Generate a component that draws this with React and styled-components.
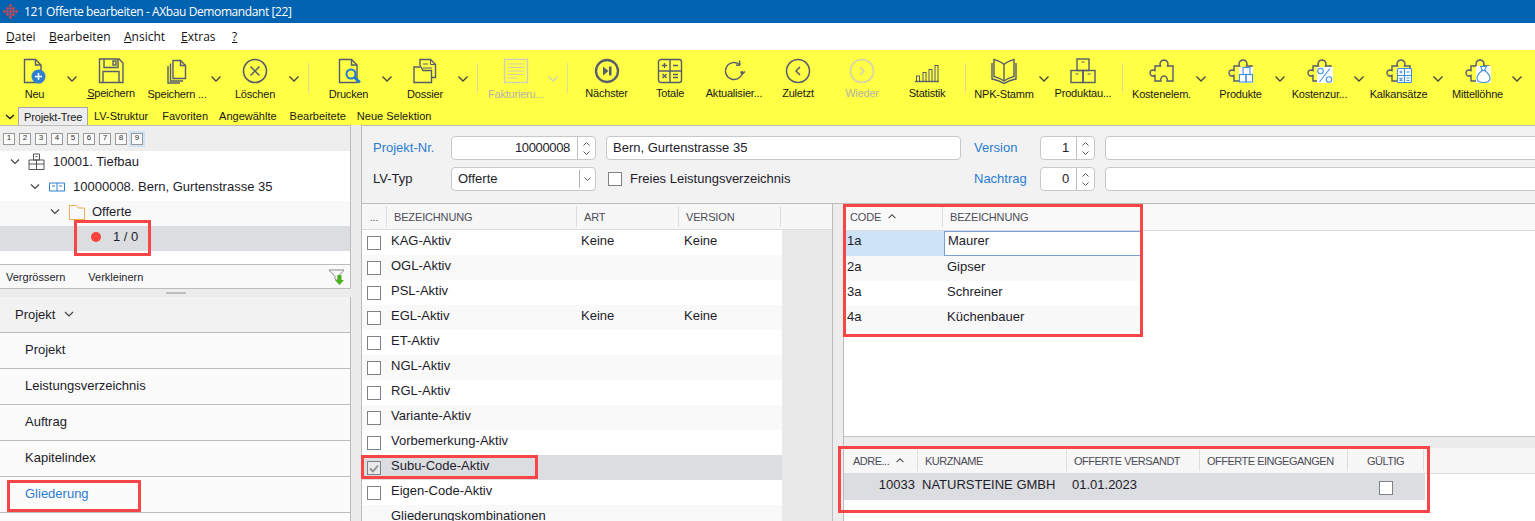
import React from "react";
import styled, { createGlobalStyle } from "styled-components";

const Global = createGlobalStyle`
  html, body { margin: 0; padding: 0; background: #ececec; overflow: hidden; }
  * { box-sizing: border-box; }
`;

const Page = styled.div`
  position: relative;
  width: 1535px;
  height: 521px;
  overflow: hidden;
  font-family: "Liberation Sans", Arial, sans-serif;
  font-size: 13px;
  color: #1c1c2a;
  background: #ececec;
`;

const TitleBar = styled.div`
  height: 23px;
  background: #0063b1;
  color: #fff;
  display: flex;
  align-items: center;
  padding-left: 3px;
  gap: 6px;
  font-family: "Open Sans", sans-serif;
  font-size: 12px;
  letter-spacing: -0.4px;
`;

const MenuBar = styled.div`
  height: 27px;
  background: #fff;
  display: flex;
  align-items: center;
  padding-left: 6px;
  gap: 14px;
  font-family: "Open Sans", sans-serif;
  font-size: 12px;
  color: #111;
`;

const MenuItem = styled.span`
  width: ${p => p.$w}px;
  flex: none;
  white-space: nowrap;
`;

const Ribbon = styled.div`
  background: #ffff46;
  height: 75px;
`;

const ToolRow = styled.div`
  height: 57px;
  display: flex;
  padding-top: 8px;
`;

const Tool = styled.div`
  width: ${p => p.$w}px;
  margin-left: ${p => p.$ml || 0}px;
  display: flex;
  flex-direction: column;
  align-items: center;
  flex: none;
`;

const ToolIcon = styled.svg`
  width: 26px;
  height: 26px;
  flex: none;
  fill: none;
  stroke: ${p => (p.$off ? "#cfcfb8" : "#565c6c")};
  stroke-width: 1.4;
`;

const ToolLabel = styled.div`
  font-size: 11px;
  letter-spacing: -0.2px;
  line-height: 14px;
  margin-top: ${p => (p.$up ? 2 : 3)}px;
  white-space: nowrap;
  color: ${p => (p.$off ? "#b4b4a6" : "#1a1a1a")};
`;

const ToolChevron = styled.svg`
  width: 12px;
  height: 8px;
  flex: none;
  margin-top: 17px;
  fill: none;
  stroke: ${p => (p.$off ? "#cfcfb8" : "#444")};
  stroke-width: 1.3;
`;

const ToolSep = styled.div`
  width: ${p => p.$w || 16}px;
  flex: none;
  display: flex;
  justify-content: center;
  &::after {
    content: "";
    display: block;
    width: 1px;
    height: 30px;
    margin-top: 5px;
    background: #dcdc96;
  }
`;

const TabRow = styled.div`
  height: 18px;
  display: flex;
  align-items: stretch;
  font-size: 11px;
`;

const TabChevron = styled.svg`
  width: 18px;
  height: 18px;
  flex: none;
  fill: none;
  stroke: #222;
  stroke-width: 1.4;
`;

const Tab = styled.div`
  padding: 0 ${p => (p.$active ? 5 : 6)}px;
  margin-right: ${p => p.$mr || 0}px;
  display: flex;
  align-items: center;
  color: #1a1a1a;
  white-space: nowrap;
  ${p => p.$active && "width:70px;letter-spacing:-0.15px;background:#ededed;border:1px solid #a8a8a8;border-bottom:none;"}
`;

const Body = styled.div`
  height: 396px;
  display: flex;
`;

const LeftCol = styled.div`
  width: 351px;
  flex: none;
  display: flex;
  flex-direction: column;
`;

const TreePanel = styled.div`
  height: 164px;
  border: 1px solid #bcbcbc;
  border-left: none;
  background: #fff;
  display: flex;
  flex-direction: column;
`;

const LevelBar = styled.div`
  height: 25px;
  background: #eeeeee;
  display: flex;
  align-items: center;
  padding-left: 1px;
`;

const LevelBtn = styled.div`
  width: 16px;
  height: 16px;
  display: flex;
  align-items: center;
  justify-content: center;
  background: ${p => (p.$on ? "#cfe3f7" : "transparent")};
  &::before {
    content: "${p => p.$n}";
    width: 10px;
    height: 10px;
    border: 1px solid #999;
    background: #fafafa;
    font-size: 8px;
    line-height: 8px;
    text-align: center;
    color: #333;
  }
`;

const TreeRow = styled.div`
  height: 25px;
  flex: none;
  display: flex;
  align-items: center;
  padding-left: ${p => p.$indent}px;
  padding-bottom: 4px;
  background: ${p => (p.$sel ? "#dcdde0" : p.$alt ? "#f9f9f9" : "#fff")};
  white-space: nowrap;
`;

const TreeChevron = styled.svg`
  width: 10px;
  height: 8px;
  flex: none;
  margin-right: 8px;
  fill: none;
  stroke: #444;
  stroke-width: 1.2;
`;

const TreeIcon = styled.svg`
  width: 18px;
  height: 18px;
  flex: none;
  margin-right: ${p => p.$gap}px;
  fill: none;
`;

const RedDot = styled.span`
  width: 10px;
  height: 10px;
  margin-right: 12px;
  border-radius: 50%;
  background: #f8423c;
  flex: none;
`;

const TreeSpace = styled.div`
  flex: 1;
`;

const TreeFooter = styled.div`
  height: 24px;
  border-top: 1px solid #bcbcbc;
  background: #f9f9f9;
  display: flex;
  align-items: center;
  padding: 0 5px 0 6px;
  font-size: 11px;
  gap: 23px;
  & > svg {
    margin-left: auto;
  }
`;

const Splitter = styled.div`
  height: 8px;
  display: flex;
  align-items: center;
  justify-content: center;
  &::after {
    content: "";
    width: 20px;
    height: 2px;
    background: #bdbdbd;
  }
`;

const Accordion = styled.div`
  flex: 1;
  border-right: 1px solid #bcbcbc;
  background: #fbfbfb;
`;

const AccordionHead = styled.div`
  height: 36px;
  background: #f2f2f2;
  border-bottom: 1px solid #bcbcbc;
  display: flex;
  align-items: center;
  padding: 0 0 1px 15px;
  gap: 9px;
`;

const NavItem = styled.div`
  height: 36px;
  border-bottom: 1px solid #bcbcbc;
  display: flex;
  align-items: center;
  padding: 0 0 2px 25px;
  color: ${p => (p.$on ? "#2b7cd3" : "#1c1c2a")};
`;

const Main = styled.div`
  margin-left: 10px;
  flex: 1;
  min-width: 0;
  border-left: 1px solid #bcbcbc;
  display: flex;
  flex-direction: column;
`;

const FormPanel = styled.div`
  height: 79px;
  flex: none;
  background: #f2f2f2;
  border-top: 1px solid #bcbcbc;
  border-bottom: 1px solid #bcbcbc;
  padding: 10px 0 0 11px;
  display: grid;
  grid-template-columns: 78px 155px 368px 66px 65px 440px;
  grid-auto-rows: 24px;
  row-gap: 7px;
  align-items: center;
`;

const FieldLabel = styled.div`
  color: ${p => (p.$link ? "#2b7cd3" : "#1c1c2a")};
  padding-bottom: 2px;
`;

const Field = styled.div`
  width: ${p => (p.$w ? p.$w + "px" : "100%")};
  height: 24px;
  background: #fff;
  border: 1px solid #c8c8c8;
  border-radius: 4px;
  display: flex;
  align-items: stretch;
  overflow: hidden;
`;

const FieldText = styled.div`
  flex: 1;
  display: flex;
  align-items: center;
  justify-content: ${p => (p.$right ? "flex-end" : "flex-start")};
  padding: 0 ${p => (p.$right ? 7 : 5)}px 2px 6px;
  letter-spacing: ${p => (p.$right ? "-0.35px" : "0")};
  white-space: nowrap;
`;

const Spin = styled.div`
  width: 18px;
  flex: none;
  border-left: 1px solid #c0c0c0;
  display: flex;
  flex-direction: column;
  align-items: center;
  justify-content: center;
  gap: 5px;
`;

const ComboBtn = styled.div`
  width: 16px;
  flex: none;
  display: flex;
  align-items: center;
  justify-content: center;
  position: relative;
  &::before {
    content: "";
    position: absolute;
    left: 0;
    top: 2px;
    bottom: 2px;
    width: 1px;
    background: #b0b0b0;
  }
`;

const MiniChevron = styled.svg`
  width: ${p => p.$size || 7}px;
  height: ${p => (p.$size ? 5 : 4)}px;
  fill: none;
  stroke: #555;
  stroke-width: 1;
`;

const CheckRow = styled.div`
  display: flex;
  align-items: center;
  gap: 8px;
  padding-left: 2px;
  & > span:last-child { padding-bottom: 2px; }
`;

const Box = styled.span`
  width: 14px;
  height: 14px;
  flex: none;
  margin-top: ${p => p.$drop || 0}px;
  background: ${p => (p.$grey ? "#e8e8e8" : "#fff")};
  border: 1px solid #7d8288;
  display: inline-flex;
  align-items: center;
  justify-content: center;
`;

const Grids = styled.div`
  flex: 1;
  display: flex;
  min-height: 0;
`;

const ListGrid = styled.div`
  width: 471px;
  flex: none;
  border-right: 1px solid #bcbcbc;
  background: #e9e9e9;
  overflow: hidden;
`;

const Head = styled.div`
  height: ${p => p.$h || 26}px;
  display: flex;
  background: ${p => p.$bg || "#f7f7f7"};
  border-bottom: 1px solid #dcdcdc;
  padding-top: 2px;
  padding-bottom: ${p => (p.$h ? 3 : 2)}px;
`;

const HeadCell = styled.div`
  width: ${p => p.$w}px;
  flex: none;
  display: flex;
  align-items: center;
  justify-content: ${p => (p.$center ? "center" : "flex-start")};
  padding-left: ${p => (p.$center ? 0 : p.$pad ?? 7)}px;
  border-right: ${p => (p.$last ? "none" : "1px solid #dedede")};
  font-size: 11px;
  letter-spacing: ${p => (p.$tight ? "-0.5px" : "-0.15px")};
  color: #4c4c56;
  white-space: nowrap;
  gap: 7px;
`;

const Rows = styled.div`
  width: ${p => (p.$w ? p.$w + "px" : "100%")};
`;

const Row = styled.div`
  height: ${p => p.$h || 25}px;
  display: flex;
  align-items: center;
  padding-bottom: 5px;
  background: ${p => (p.$sel ? "#dcdde0" : p.$alt ? "#f9f9f9" : "#fff")};
`;

const Cell = styled.div`
  width: ${p => p.$w}px;
  flex: none;
  padding-left: ${p => p.$pad ?? 0}px;
  text-align: ${p => (p.$right ? "right" : "left")};
  white-space: nowrap;
`;

const BoxCell = styled.div`
  width: 29px;
  flex: none;
  display: flex;
  padding: 3px 0 0 5px;
  margin-bottom: -3px;
`;

const RightCol = styled.div`
  flex: 1;
  margin-left: 10px;
  min-width: 0;
  border-left: 1px solid #bcbcbc;
  display: flex;
  flex-direction: column;
`;

const CodePanel = styled.div`
  height: 233px;
  flex: none;
  background: #fff;
  border-bottom: 1px solid #c4c4c4;
`;

const CodeRow = styled.div`
  height: 25px;
  display: flex;
  align-items: stretch;
  background: ${p => (p.$alt ? "#f8f8f8" : "#fff")};
  width: 297px;
`;

const CodeCell = styled.div`
  width: ${p => p.$w}px;
  flex: none;
  display: flex;
  align-items: center;
  padding: 0 0 ${p => (p.$sel || p.$edit ? 6 : 4)}px ${p => p.$pad ?? 3}px;
  background: ${p => (p.$sel ? "#cfe3f7" : "transparent")};
  ${p => p.$edit && "border:1px solid #7b9fd0;background:#fff;"}
`;

const LowerGap = styled.div`
  height: 11px;
  flex: none;
`;

const AddressPanel = styled.div`
  flex: 1;
  background: #fff;
`;

const Annotation = styled.div`
  position: absolute;
  left: ${p => p.$x}px;
  top: ${p => p.$y}px;
  width: ${p => p.$w}px;
  height: ${p => p.$h}px;
  border: 3px solid #f94545;
  pointer-events: none;
`;

const Chev = ({ off }) => (
  <ToolChevron $off={off} viewBox="0 0 12 8"><path d="M1.5 1.5 6 6l4.5-4.5" /></ToolChevron>
);

const Puzzle = () => (
  <path d="M6 8h5.5c-1.5-3 .5-6 3.5-6s5 3 3.5 6H24v15h-6c1-3-1-5-3-5s-4 2-3 5H6v-5.5c-3 1.5-5-.5-5-2.5s2-4 5-2.5z" />
);

const blue = { stroke: "#3f8fdc", strokeWidth: 1.1 };

const icons = {
  neu: (
    <>
      <path d="M2.5 1.5h11l5.5 5.5v17.5h-16.5z" />
      <path d="M13.5 1.5V7H19" />
      <circle cx="16.5" cy="18.5" r="7" fill="#2f7fd3" stroke="none" />
      <path d="M13 18.5h7M16.500 15v7" stroke="#fff" strokeWidth="1.5" />
    </>
  ),
  save: (
    <>
      <path d="M1.500 1h19.500l4 4v19.500h-23.500z" />
      <path d="M6 1v8.500h14V1M5 24.500V13.500h16v11" />
      <rect x="15" y="3" width="3" height="4" />
    </>
  ),
  saveAs: (
    <>
      <path d="M9 2.500h7.500l5 5V20.500H9z" />
      <path d="M16.500 2.500v5h5" />
      <path d="M6.500 5.500v17.500h12.500M4 8v17h12" />
    </>
  ),
  del: (
    <>
      <circle cx="13" cy="13" r="11.500" strokeWidth="1.600" />
      <path d="M8.500 8.500l9 9M17.500 8.500l-9 9" strokeWidth="1.500" />
    </>
  ),
  print: (
    <>
      <path d="M3.500 1.500h12l5.500 5.500v17.500H3.500z" />
      <path d="M15.500 1.500V7H21" />
      <circle cx="15" cy="16" r="4.500" fill="#ffff46" stroke="#1f78d1" strokeWidth="2" />
      <path d="M18.500 19.500l5.500 5" stroke="#1f78d1" strokeWidth="2.600" />
    </>
  ),
  dossier: (
    <>
      <path d="M8 8V1.500h10.500l5 5V19.500H20" />
      <path d="M18.500 1.500v5h5M11 6h5M11 10h9M11 13h9M11 16h9" strokeWidth="1" />
      <path d="M2 24.500V9h7l2 3.500h8.500v12z" fill="#ffff46" />
    </>
  ),
  invoice: (
    <>
      <rect x="1.500" y="1.500" width="23" height="23" />
      <path d="M5 6h16M5 9.500h16M5 13h16M5 16.500h16M5 20h10" strokeWidth="1" />
    </>
  ),
  next: (
    <>
      <circle cx="13" cy="13" r="11" strokeWidth="2.300" />
      <path d="M9 8.500l5.500 4.500L9 17.500z" fill="#565c6c" stroke="none" />
      <rect x="15" y="8.500" width="2.500" height="9" fill="#565c6c" stroke="none" />
    </>
  ),
  totals: (
    <>
      <rect x="1.500" y="1.500" width="23" height="23" rx="2.500" />
      <path d="M13 1.500v23M1.500 13h23" />
      <path d="M5 7.500h5M7.500 5v5M16 7.500h5M5.500 16l4 4M9.500 16l-4 4M16 16.500h5M16 19.500h5" />
    </>
  ),
  refresh: (
    <>
      <path d="M21.500 13a8.500 8.500 0 1 1-2.500-6" strokeWidth="1.400" />
      <path d="M18.500 2.500l.5 4.500M19 7l-4 .2M19.500 13.500l2 2.500 2.500-2.500" strokeWidth="1.400" />
    </>
  ),
  back: (
    <>
      <circle cx="13" cy="13" r="11.500" strokeWidth="1.500" />
      <path d="M15 9l-4 4 4 4" strokeWidth="1.500" />
    </>
  ),
  forward: (
    <>
      <circle cx="13" cy="13" r="11.500" strokeWidth="1.500" />
      <path d="M11 9l4 4-4 4" strokeWidth="1.500" />
    </>
  ),
  stats: (
    <>
      <path d="M1 23.500h24" />
      <rect x="2.500" y="18" width="3" height="5.500" strokeWidth="1" />
      <rect x="9" y="14.500" width="3" height="9" strokeWidth="1" />
      <rect x="15" y="11.500" width="3" height="12" strokeWidth="1" />
      <rect x="21" y="7.500" width="3" height="16" strokeWidth="1" />
    </>
  ),
  book: (
    <>
      <path d="M13 6.500C10 3.500 6 2.500 3 1.500v17c3 1 7 2 10 4.500 3-2.500 7-3.500 10-4.500v-17c-3 1-7 2-10 5zM13 6.500V23" />
      <path d="M1 5v16c4 1 9 2.500 12 4.500 3-2 8-3.500 12-4.500V5" />
    </>
  ),
  boxes: (
    <>
      <rect x="7" y="1" width="12" height="11.500" fill="none" />
      <rect x="1" y="12.500" width="12" height="12" />
      <rect x="13" y="12.500" width="12" height="12" />
      <path d="M11.500 4h3M5.500 16h3M17.500 16h3" strokeWidth="1.200" />
    </>
  ),
  puzzle: <Puzzle />,
  puzzleBox: (
    <>
      <Puzzle />
      <rect x="11" y="9" width="14" height="16" fill="#fff" stroke="none" />
      <rect x="15" y="9.500" width="7" height="7" {...blue} />
      <rect x="11.500" y="16.500" width="6.500" height="7.500" {...blue} />
      <rect x="18" y="16.500" width="6.500" height="7.500" {...blue} />
    </>
  ),
  puzzlePercent: (
    <>
      <Puzzle />
      <rect x="10" y="9" width="16" height="16" fill="#fff" stroke="none" />
      <circle cx="13.500" cy="13" r="2.700" {...blue} />
      <circle cx="22" cy="21.500" r="2.700" {...blue} />
      <path d="M23 10.500L12.500 24" {...blue} />
    </>
  ),
  puzzleCalc: (
    <>
      <Puzzle />
      <rect x="11" y="10" width="15" height="15" fill="#fff" stroke="none" />
      <rect x="11.500" y="10.500" width="14" height="14" rx="1" {...blue} />
      <path d="M18.500 10.500v14M11.500 17.500h14M13.500 14h3M15 12.500v3M20.500 14h3M13.500 20l3 2.500M16.500 20l-3 2.500M20.500 20h3M20.500 22.500h3" {...blue} />
    </>
  ),
  puzzleBag: (
    <>
      <Puzzle />
      <rect x="11" y="8" width="15" height="17" fill="#fff" stroke="none" />
      <path d="M15.500 8.500h6l-2 4c3 2 5.500 5 5.500 8 0 3-2.500 4-6.500 4s-6.500-1-6.500-4c0-3 2.500-6 5.500-8z" {...blue} />
      <path d="M16 12.500h5" {...blue} />
    </>
  ),
};

const layout = [
  { t: "tool", w: 63, ml: 3, icon: "neu", label: "Neu" },
  { t: "chev" },
  { t: "tool", w: 66, icon: "save", label: <><u>S</u>peichern</>, up: 1 },
  { t: "tool", w: 66, icon: "saveAs", label: "Speichern ..." },
  { t: "chev" },
  { t: "tool", w: 66, icon: "del", label: "Löschen" },
  { t: "chev" },
  { t: "sep" },
  { t: "tool", w: 65, icon: "print", label: "Drucken" },
  { t: "chev" },
  { t: "tool", w: 64, icon: "dossier", label: "Dossier" },
  { t: "chev" },
  { t: "sep" },
  { t: "tool", w: 62, icon: "invoice", label: "Fakturieru...", off: 1 },
  { t: "chev", off: 1 },
  { t: "sep" },
  { t: "tool", w: 63, icon: "next", label: "Nächster", up: 1 },
  { t: "tool", w: 64, icon: "totals", label: "Totale", up: 1 },
  { t: "tool", w: 64, icon: "refresh", label: "Aktualisier...", up: 1 },
  { t: "tool", w: 64, icon: "back", label: "Zuletzt", up: 1 },
  { t: "tool", w: 64, icon: "forward", label: "Wieder", off: 1, up: 1 },
  { t: "tool", w: 66, icon: "stats", label: "Statistik", up: 1 },
  { t: "sep", w: 10 },
  { t: "tool", w: 68, icon: "book", label: "NPK-Stamm" },
  { t: "chev" },
  { t: "tool", w: 66, icon: "boxes", label: "Produktau...", up: 1 },
  { t: "sep", w: 12 },
  { t: "tool", w: 67, icon: "puzzle", label: "Kostenelem." },
  { t: "chev" },
  { t: "tool", w: 67, icon: "puzzleBox", label: "Produkte" },
  { t: "chev" },
  { t: "tool", w: 67, icon: "puzzlePercent", label: "Kostenzur..." },
  { t: "chev" },
  { t: "tool", w: 67, icon: "puzzleCalc", label: "Kalkansätze" },
  { t: "chev" },
  { t: "tool", w: 67, icon: "puzzleBag", label: "Mittellöhne" },
  { t: "chev" },
];

const tabs = [
  { label: "Projekt-Tree" },
  { label: "LV-Struktur", mr: 2 },
  { label: "Favoriten", mr: -1 },
  { label: "Angewählte", mr: 1 },
  { label: "Bearbeitete", mr: -1 },
  { label: "Neue Selektion" },
];

const listRows = [
  ["KAG-Aktiv", "Keine", "Keine"],
  ["OGL-Aktiv"],
  ["PSL-Aktiv"],
  ["EGL-Aktiv", "Keine", "Keine"],
  ["ET-Aktiv"],
  ["NGL-Aktiv"],
  ["RGL-Aktiv"],
  ["Variante-Aktiv"],
  ["Vorbemerkung-Aktiv"],
  ["Subu-Code-Aktiv"],
  ["Eigen-Code-Aktiv"],
];

const Spinner = () => (
  <Spin>
    <MiniChevron viewBox="0 0 7 4"><path d="M.5 3.500 3.500.5l3 3" /></MiniChevron>
    <MiniChevron viewBox="0 0 7 4"><path d="M.5.5l3 3 3-3" /></MiniChevron>
  </Spin>
);

const Sort = () => (
  <MiniChevron $size={8} viewBox="0 0 7 4"><path d="M.5 3.500 3.500.5l3 3" /></MiniChevron>
);

const Logo = () => (
  <svg width="15" height="15" viewBox="0 0 15 15">
    {[[6.300, 0.300], [3.300, 3.300], [9.300, 3.300], [0.300, 6.300], [6.300, 6.300], [12.300, 6.300], [3.300, 9.300], [9.300, 9.300], [6.300, 12.300]].map(([x, y]) => (
      <rect key={`${x}-${y}`} x={x} y={y} width="2.400" height="2.400" fill="#e8413c" />
    ))}
    {[[6.500, 3.500], [3.500, 6.500], [9.500, 6.500], [6.500, 9.500]].map(([x, y]) => (
      <rect key={`${x}-${y}`} x={x} y={y} width="2" height="2" fill="#c9566a" />
    ))}
  </svg>
);

const Down = () => (
  <TreeChevron viewBox="0 0 10 8"><path d="M1 1.500l4 4 4-4" /></TreeChevron>
);

export default function App() {
  return (
    <Page>
      <Global />
      <TitleBar>
        <Logo />
        <span>121 Offerte bearbeiten - AXbau Demomandant [22]</span>
      </TitleBar>
      <MenuBar>
        <MenuItem $w={29}><u>D</u>atei</MenuItem>
        <MenuItem $w={61}><u>B</u>earbeiten</MenuItem>
        <MenuItem $w={43}><u>A</u>nsicht</MenuItem>
        <MenuItem $w={37}><u>E</u>xtras</MenuItem>
        <MenuItem $w={8}><u>?</u></MenuItem>
      </MenuBar>
      <Ribbon>
        <ToolRow>
          {layout.map((it, i) => {
            if (it.t === "chev") return <Chev key={i} off={it.off} />;
            if (it.t === "sep") return <ToolSep key={i} $w={it.w} />;
            return (
              <Tool key={i} $w={it.w} $ml={it.ml}>
                <ToolIcon viewBox="0 0 26 26" $off={it.off}>{icons[it.icon]}</ToolIcon>
                <ToolLabel $off={it.off} $up={it.up}>{it.label}</ToolLabel>
              </Tool>
            );
          })}
        </ToolRow>
        <TabRow>
          <TabChevron viewBox="0 0 18 18"><path d="M6 8l4 3.500L14 8" /></TabChevron>
          {tabs.map((t, i) => <Tab key={t.label} $active={i === 0} $mr={t.mr}>{t.label}</Tab>)}
        </TabRow>
      </Ribbon>
      <Body>
        <LeftCol>
          <TreePanel>
            <LevelBar>
              {[1, 2, 3, 4, 5, 6, 7, 8, 9].map(n => <LevelBtn key={n} $n={n} $on={n === 9} />)}
            </LevelBar>
            <TreeRow $indent={10}>
              <Down />
              <TreeIcon $gap={7} viewBox="0 0 18 18">
                <path d="M5.500 1h6v6h-6zM1 7h15v9.500H1zM8.500 7v9.500M1 11h15M7.500 3.500h2" stroke="#555" />
              </TreeIcon>
              10001. Tiefbau
            </TreeRow>
            <TreeRow $indent={30}>
              <Down />
              <TreeIcon $gap={7} viewBox="0 0 18 18">
                <path d="M1.500 5h15v8h-15zM9 5v8M4 8h3M11 8h3" stroke="#2f7fd3" />
              </TreeIcon>
              10000008. Bern, Gurtenstrasse 35
            </TreeRow>
            <TreeRow $indent={50} $alt>
              <Down />
              <TreeIcon $gap={6} viewBox="0 0 18 18">
                <path d="M1.500 2.500h7l2 2.500h6v11.500h-15z" stroke="#f2ac4e" />
              </TreeIcon>
              Offerte
            </TreeRow>
            <TreeRow $indent={91} $sel>
              <RedDot />
              1 / 0
            </TreeRow>
            <TreeSpace />
            <TreeFooter>
              <span>Vergrössern</span>
              <span>Verkleinern</span>
              <svg width="17" height="16" viewBox="0 0 17 16" fill="none">
                <path d="M1 1h15l-6 6.500V12l-3-2V7.500z" stroke="#8a8a8a" />
                <path d="M9.500 6h4v5H16l-4.500 5-4.500-5h2.500z" fill="#4caf1f" />
              </svg>
            </TreeFooter>
          </TreePanel>
          <Splitter />
          <Accordion>
            <AccordionHead>
              Projekt
              <svg width="10" height="7" viewBox="0 0 10 7" fill="none" stroke="#444" strokeWidth="1.200"><path d="M1 1l4 4 4-4" /></svg>
            </AccordionHead>
            <NavItem>Projekt</NavItem>
            <NavItem>Leistungsverzeichnis</NavItem>
            <NavItem>Auftrag</NavItem>
            <NavItem>Kapitelindex</NavItem>
            <NavItem $on>Gliederung</NavItem>
          </Accordion>
        </LeftCol>
        <Main>
          <FormPanel>
            <FieldLabel $link>Projekt-Nr.</FieldLabel>
            <Field $w={145}><FieldText $right>10000008</FieldText><Spinner /></Field>
            <Field $w={355}><FieldText>Bern, Gurtenstrasse 35</FieldText></Field>
            <FieldLabel $link>Version</FieldLabel>
            <Field $w={55}><FieldText $right>1</FieldText><Spinner /></Field>
            <Field />
            <FieldLabel>LV-Typ</FieldLabel>
            <Field $w={145}>
              <FieldText>Offerte</FieldText>
              <ComboBtn><MiniChevron viewBox="0 0 7 4"><path d="M.5.5l3 3 3-3" /></MiniChevron></ComboBtn>
            </Field>
            <CheckRow><Box /><span>Freies Leistungsverzeichnis</span></CheckRow>
            <FieldLabel $link>Nachtrag</FieldLabel>
            <Field $w={55}><FieldText $right>0</FieldText><Spinner /></Field>
            <Field />
          </FormPanel>
          <Grids>
            <ListGrid>
              <Head>
                <HeadCell $w={25} $center>...</HeadCell>
                <HeadCell $w={190}>BEZEICHNUNG</HeadCell>
                <HeadCell $w={102}>ART</HeadCell>
                <HeadCell $w={102}>VERSION</HeadCell>
              </Head>
              <Rows $w={420}>
                {listRows.map((r, i) => (
                  <Row key={r[0]} $alt={i % 2 === 1} $sel={r[0] === "Subu-Code-Aktiv"}>
                    <BoxCell>
                      <Box $grey={r[0] === "Subu-Code-Aktiv"}>
                        {r[0] === "Subu-Code-Aktiv" && (
                          <svg width="10" height="9" viewBox="0 0 10 9" fill="none" stroke="#8d8f94" strokeWidth="1.800"><path d="M1 4.500l3 3 5-6" /></svg>
                        )}
                      </Box>
                    </BoxCell>
                    <Cell $w={190}>{r[0]}</Cell>
                    <Cell $w={103}>{r[1]}</Cell>
                    <Cell $w={98}>{r[2]}</Cell>
                  </Row>
                ))}
                <Row $alt>
                  <Cell $w={29} />
                  <Cell $w={190}>Gliederungskombinationen</Cell>
                </Row>
              </Rows>
            </ListGrid>
            <RightCol>
              <CodePanel>
                <Head $bg="#f9f9f9" $h={27}>
                  <HeadCell $w={99} $pad={6}>CODE <Sort /></HeadCell>
                  <HeadCell $w={300} $last>BEZEICHNUNG</HeadCell>
                </Head>
                <CodeRow>
                  <CodeCell $w={100} $sel>1a</CodeCell>
                  <CodeCell $w={197} $edit>Maurer</CodeCell>
                </CodeRow>
                <CodeRow $alt>
                  <CodeCell $w={100}>2a</CodeCell>
                  <CodeCell $w={197}>Gipser</CodeCell>
                </CodeRow>
                <CodeRow>
                  <CodeCell $w={100}>3a</CodeCell>
                  <CodeCell $w={197}>Schreiner</CodeCell>
                </CodeRow>
                <CodeRow $alt>
                  <CodeCell $w={100}>4a</CodeCell>
                  <CodeCell $w={197}>Küchenbauer</CodeCell>
                </CodeRow>
              </CodePanel>
              <LowerGap />
              <AddressPanel>
                <Head>
                  <HeadCell $w={74} $pad={9} $tight>ADRE... <Sort /></HeadCell>
                  <HeadCell $w={149} $tight>KURZNAME</HeadCell>
                  <HeadCell $w={133} $tight>OFFERTE VERSANDT</HeadCell>
                  <HeadCell $w={148} $tight>OFFERTE EINGEGANGEN</HeadCell>
                  <HeadCell $w={76} $center $tight>GÜLTIG</HeadCell>
                </Head>
                <Rows $w={581}>
                  <Row $sel $h={26}>
                    <Cell $w={71} $right>10033</Cell>
                    <Cell $w={157} $pad={7}>NATURSTEINE GMBH</Cell>
                    <Cell $w={307}>01.01.2023</Cell>
                    <Box $drop={7} />
                  </Row>
                </Rows>
              </AddressPanel>
            </RightCol>
          </Grids>
        </Main>
      </Body>
      <Annotation $x={74} $y={220} $w={77} $h={36} />
      <Annotation $x={7} $y={480} $w={134} $h={32} />
      <Annotation $x={361} $y={455} $w={177} $h={24} />
      <Annotation $x={843} $y={204} $w={300} $h={133} />
      <Annotation $x={838} $y={446} $w={592} $h={67} />
    </Page>
  );
}
